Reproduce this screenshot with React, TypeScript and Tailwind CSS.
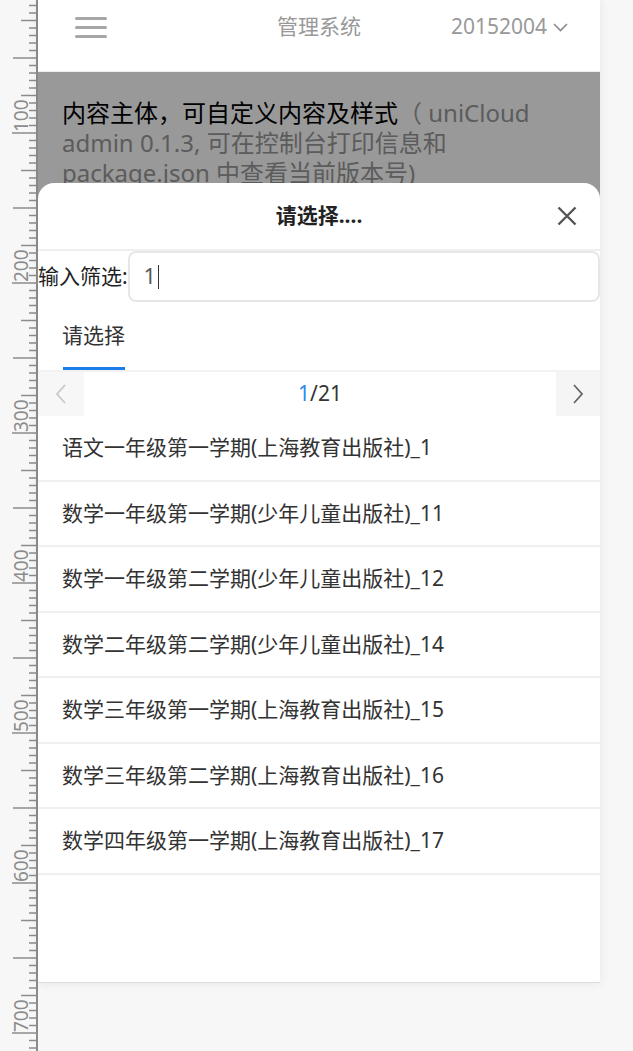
import React from "react";

const books = [
  "语文一年级第一学期(上海教育出版社)_1",
  "数学一年级第一学期(少年儿童出版社)_11",
  "数学一年级第二学期(少年儿童出版社)_12",
  "数学二年级第二学期(少年儿童出版社)_14",
  "数学三年级第一学期(上海教育出版社)_15",
  "数学三年级第二学期(上海教育出版社)_16",
  "数学四年级第一学期(上海教育出版社)_17",
];

function Ruler() {
  const ticks = [];
  const labels = [];
  for (let u = -10; u <= 720; u += 5) {
    const y = -17 + u * 1.5;
    let x1 = 29;
    if (u % 100 === 0) x1 = 12;
    else if (u % 50 === 0) x1 = 13;
    else if (u % 25 === 0) x1 = 21;
    ticks.push(
      <line key={u} x1={x1} x2={37} y1={y} y2={y} stroke="#8c8c8c" strokeWidth={1.5} />
    );
    if (u > 0 && u % 100 === 0) {
      labels.push(
        <text
          key={"l" + u}
          transform={`translate(28 ${y - 1}) rotate(-90)`}
          fontSize={19}
          fill="#8c8c8c"
          fontFamily="Noto Sans, sans-serif"
        >
          {u}
        </text>
      );
    }
  }
  return (
    <svg width="38" height="1051" className="shrink-0">
      <line x1={37} x2={37} y1={0} y2={1051} stroke="#8c8c8c" strokeWidth={2} />
      {ticks}
      {labels}
    </svg>
  );
}

function Chevron({ dir, color }: { dir: "left" | "right"; color: string }) {
  return (
    <svg width="12" height="20" viewBox="0 0 12 20">
      <path
        d={dir === "left" ? "M10 1 L2 10 L10 19" : "M2 1 L10 10 L2 19"}
        fill="none"
        stroke={color}
        strokeWidth="1.8"
      />
    </svg>
  );
}

export default function App() {
  return (
    <div className="flex h-[1051px] w-[633px] overflow-hidden bg-[#f7f7f7] font-['Noto_Sans','Noto_Sans_CJK_SC',sans-serif]">
      <Ruler />
      <div className="relative flex h-[983px] w-[562px] shrink-0 flex-col bg-white shadow-[0_0_10px_rgba(0,0,0,0.08)]">
        {/* navbar */}
        <header className="relative z-20 h-[72px] shrink-0 border-b border-[#ececec] bg-white">
          <div className="relative flex h-[54px] items-center justify-between pl-[37px] pr-[32px]">
            <div className="flex w-[32px] flex-col gap-[6px]">
              <span className="h-[3px] rounded bg-[#a6a6a6]" />
              <span className="h-[3px] rounded bg-[#a6a6a6]" />
              <span className="h-[3px] rounded bg-[#a6a6a6]" />
            </div>
            <span className="absolute left-1/2 -translate-x-1/2 text-[21px] text-[#999]">管理系统</span>
            <div className="flex items-center gap-[6px] text-[21px] text-[#999]">
              <span>20152004</span>
              <svg width="15" height="9" viewBox="0 0 15 9">
                <path d="M1 1 L7.5 7.5 L14 1" fill="none" stroke="#8a8a8a" strokeWidth="1.6" />
              </svg>
            </div>
          </div>
        </header>

        {/* page content */}
        <div className="px-[24px] pt-[26px] text-[24px] leading-[30px]">
          <span className="text-black">内容主体，可自定义内容及样式</span>
          <span className="text-[#999]">
            （ uniCloud
            <br />
            admin 0.1.3, 可在控制台打印信息和
            <br />
            package.json 中查看当前版本号)
          </span>
        </div>

        {/* mask */}
        <div className="absolute inset-x-0 top-[72px] bottom-0 z-10 bg-black/40" />

        {/* popup */}
        <div className="absolute inset-x-0 bottom-0 z-20 flex h-[800px] flex-col rounded-t-[16px] border-b border-[#dcdcdc] bg-white">
          <div className="relative flex h-[68px] shrink-0 items-center justify-center border-b-2 border-[#efefef]">
            <span className="text-[21px] font-bold text-[#222]">请选择....</span>
            <svg className="absolute right-[23px]" width="20" height="20" viewBox="0 0 20 20">
              <path d="M1.5 1.5 L18.5 18.5 M18.5 1.5 L1.5 18.5" stroke="#555" strokeWidth="2.4" />
            </svg>
          </div>

          <div className="flex h-[51px] shrink-0 items-center">
            <span className="text-[21px] text-[#222]">输入筛选:</span>
            <div className="flex h-[51px] flex-1 items-center rounded-[8px] border-2 border-[#e6e6e6] pl-[14px] text-[21px] text-[#555]">
              <span>1</span>
              <span className="ml-[2px] h-[24px] w-[1.5px] bg-[#333]" />
            </div>
          </div>

          <div className="flex h-[70px] shrink-0 items-end border-b-2 border-[#f2f2f2] pl-[24px]">
            <div className="flex flex-col items-center">
              <span className="text-[21px] leading-[30px] text-[#333]">请选择</span>
              <span className="mt-[17px] h-[3px] w-[62px] bg-[#1a7de8]" />
            </div>
          </div>

          <div className="flex h-[44px] shrink-0 items-center justify-between">
            <div className="flex h-full w-[46px] items-center justify-center bg-[#f7f7f7]">
              <Chevron dir="left" color="#c8c8c8" />
            </div>
            <span className="text-[21px] text-[#333]">
              <span className="text-[#2f86f0]">1</span>/21
            </span>
            <div className="flex h-full w-[44px] items-center justify-center bg-[#f5f5f5]">
              <Chevron dir="right" color="#666" />
            </div>
          </div>

          <ul className="flex flex-col">
            {books.map((b) => (
              <li
                key={b}
                className="flex h-[65.5px] items-center border-b-2 border-[#f0f0f0] pb-[2px] pl-[24px] pt-[2px] text-[21px] text-[#333]"
              >
                {b}
              </li>
            ))}
          </ul>
        </div>
      </div>
    </div>
  );
}
